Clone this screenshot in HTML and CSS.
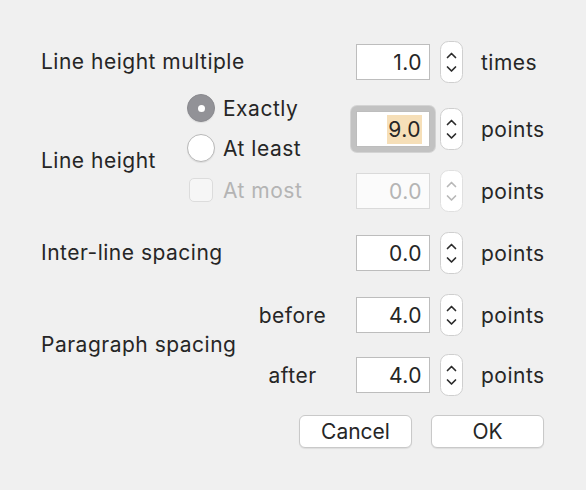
FILE: index.html
```html
<!DOCTYPE html>
<html lang="en">
<head>
  <meta charset="UTF-8">
  <title>Line Spacing</title>
  <link rel="stylesheet" href="styles.css">
</head>
<body>

  <div class="dialog">

    <div class="row first">
      <div class="label wide">Line height multiple</div>
      <div class="controls">
        <div class="num">1.0</div>
        <span class="stepper"><svg width="23" height="42" viewBox="0 0 23 42"><rect x="0.5" y="0.5" width="22" height="41" rx="8"/><polyline points="7.5,16.5 11.5,12.5 15.5,16.5"/><polyline points="7.5,26 11.5,30 15.5,26"/></svg></span>
        <span class="unit">times</span>
      </div>
    </div>

    <div class="group lh">
      <div class="label narrow lh-label">Line height</div>
      <div class="options">
        <label class="option"><span class="radio on"></span>Exactly</label>
        <label class="option"><span class="radio"></span>At least</label>
        <label class="option disabled"><span class="check"></span>At most</label>
      </div>
      <div class="stack lh-stack">
        <div class="controls">
          <span class="ring"><div class="num"><span class="sel">9.0</span></div></span>
          <span class="stepper"><svg width="23" height="42" viewBox="0 0 23 42"><rect x="0.5" y="0.5" width="22" height="41" rx="8"/><polyline points="7.5,16.5 11.5,12.5 15.5,16.5"/><polyline points="7.5,26 11.5,30 15.5,26"/></svg></span>
          <span class="unit">points</span>
        </div>
        <div class="controls disabled">
          <div class="num">0.0</div>
          <span class="stepper"><svg width="23" height="42" viewBox="0 0 23 42"><rect x="0.5" y="0.5" width="22" height="41" rx="8"/><polyline points="7.5,16.5 11.5,12.5 15.5,16.5"/><polyline points="7.5,26 11.5,30 15.5,26"/></svg></span>
          <span class="unit">points</span>
        </div>
      </div>
    </div>

    <div class="row inter">
      <div class="label wide">Inter-line spacing</div>
      <div class="controls">
        <div class="num">0.0</div>
        <span class="stepper"><svg width="23" height="42" viewBox="0 0 23 42"><rect x="0.5" y="0.5" width="22" height="41" rx="8"/><polyline points="7.5,16.5 11.5,12.5 15.5,16.5"/><polyline points="7.5,26 11.5,30 15.5,26"/></svg></span>
        <span class="unit">points</span>
      </div>
    </div>

    <div class="group para">
      <div class="label narrow">Paragraph spacing</div>
      <div class="stack para-stack">
        <div class="sub-row">
          <span class="sub">before</span>
          <div class="controls">
            <div class="num">4.0</div>
            <span class="stepper"><svg width="23" height="42" viewBox="0 0 23 42"><rect x="0.5" y="0.5" width="22" height="41" rx="8"/><polyline points="7.5,16.5 11.5,12.5 15.5,16.5"/><polyline points="7.5,26 11.5,30 15.5,26"/></svg></span>
            <span class="unit">points</span>
          </div>
        </div>
        <div class="sub-row">
          <span class="sub">after</span>
          <div class="controls">
            <div class="num">4.0</div>
            <span class="stepper"><svg width="23" height="42" viewBox="0 0 23 42"><rect x="0.5" y="0.5" width="22" height="41" rx="8"/><polyline points="7.5,16.5 11.5,12.5 15.5,16.5"/><polyline points="7.5,26 11.5,30 15.5,26"/></svg></span>
            <span class="unit">points</span>
          </div>
        </div>
      </div>
    </div>

    <div class="buttons">
      <button type="button">Cancel</button>
      <button type="button">OK</button>
    </div>

  </div>

</body>
</html>
```

FILE: styles.css
```css
html, body { margin: 0; height: 100%; }
body {
  background: #f0f0f0;
  color: #262626;
  font-family: "Inter", "Liberation Sans", sans-serif;
  font-size: 21px;
  letter-spacing: 0.5px;
}
.dialog { padding: 41px 0 0 41px; display: flex; flex-direction: column; }

.row, .group { display: flex; }
.row { height: 42px; align-items: center; }
.label { line-height: 24px; white-space: nowrap; }
.label.wide { width: 315px; }
.label.narrow { width: 146px; flex: none; }

.group.lh { margin-top: 5px; height: 124px; }
.lh-label { align-self: center; margin-top: 22px; }
.options { width: 169px; display: flex; flex-direction: column; flex: none; }
.option { display: flex; align-items: center; height: 40px; white-space: nowrap; }
.option:last-child { margin-top: 2px; }
.radio {
  width: 26px; height: 26px; border-radius: 50%;
  border: 1px solid #b8b8b8; background: #fff;
  box-shadow: 0 1px 1px rgba(0,0,0,0.08);
  margin-right: 8px; position: relative; flex: none;
}
.radio.on { background: #929297; border-color: #8a8a8f; }
.radio.on::after {
  content: ""; position: absolute; left: 9.5px; top: 9.5px;
  width: 7px; height: 7px; border-radius: 50%; background: #fff;
}
.check {
  width: 22px; height: 22px; border-radius: 5px;
  border: 1px solid #dcdcdc; background: #f6f6f6;
  margin: 0 10px 0 2px; flex: none;
}
.option.disabled { color: #b4b4b4; }

.stack { display: flex; flex-direction: column; }
.lh-stack { padding-top: 20px; gap: 20px; }
.para-stack { gap: 18px; }

.controls { display: flex; align-items: center; height: 42px; }
.num {
  box-sizing: border-box; width: 74px; height: 36px;
  border: 1px solid #bdbdbd; background: #fff;
  text-align: right; padding-right: 7px; line-height: 36px;
}
.ring {
  display: block; margin: -5px; padding: 5px; border-radius: 6px;
  background: #c2c2c2; box-shadow: 0 0 0 1px #d4d4d4;
}
.sel { background: #f6dfb8; padding: 2px 1px; }
.stepper { margin-left: 10px; display: flex; }
.stepper rect { fill: #fff; stroke: #cfcfcf; }
.stepper polyline { fill: none; stroke: #2b2b2b; stroke-width: 1.7; stroke-linecap: round; stroke-linejoin: round; }
.unit { margin-left: 18px; }

.controls.disabled .num { color: #b4b4b4; border-color: #dadada; background: #fbfbfb; }
.controls.disabled .stepper rect { stroke: #e0e0e0; }
.controls.disabled .stepper polyline { stroke: #b8b8b8; }

.row.inter { margin-top: 20px; }
.group.para { margin-top: 20px; align-items: center; }
.sub-row { display: flex; align-items: center; }
.sub { width: 127px; padding-left: 42px; text-align: center; }

.buttons { display: flex; justify-content: flex-end; gap: 19px; padding-right: 42px; margin-top: 19px; }
.buttons button {
  width: 113px; height: 33px; font: inherit; color: #262626;
  background: #fff; border: 1px solid #c9c9c9; border-radius: 6px;
  box-shadow: 0 1px 1px rgba(0,0,0,0.08); padding: 0;
}
```
